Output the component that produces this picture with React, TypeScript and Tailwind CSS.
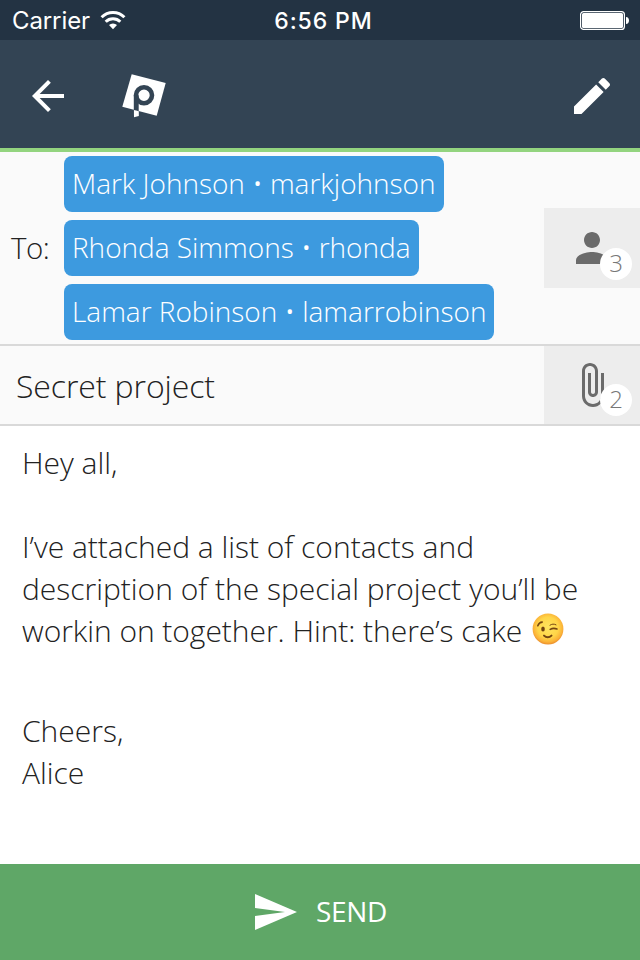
import React from "react";

const recipients = [
  { name: "Mark Johnson", user: "markjohnson", size: "w-[380px]" },
  { name: "Rhonda Simmons", user: "rhonda", size: "w-[355px]" },
  { name: "Lamar Robinson", user: "lamarrobinson", size: "w-[430px]" },
];

function Icon({ d, className = "" }: { d: string; className?: string }) {
  return (
    <svg viewBox="0 0 24 24" className={`block h-12 w-12 shrink-0 ${className}`} fill="currentColor">
      <path d={d} />
    </svg>
  );
}

const BACK = "M20 11H7.83l5.59-5.59L12 4l-8 8 8 8 1.41-1.41L7.83 13H20v-2z";
const EDIT =
  "M3 17.25V21h3.75L17.81 9.94l-3.75-3.75L3 17.25zM20.71 7.04c.39-.39.39-1.02 0-1.41l-2.34-2.34c-.39-.39-1.02-.39-1.41 0l-1.83 1.83 3.75 3.75 1.83-1.83z";
const PERSON =
  "M12 12c2.21 0 4-1.79 4-4s-1.79-4-4-4-4 1.79-4 4 1.79 4 4 4zm0 2c-2.67 0-8 1.34-8 4v2h16v-2c0-2.66-5.33-4-8-4z";
const CLIP =
  "M16.5 6v11.5c0 2.21-1.79 4-4 4s-4-1.79-4-4V5c0-1.38 1.12-2.5 2.5-2.5s2.5 1.12 2.5 2.5v10.5c0 .55-.45 1-1 1s-1-.45-1-1V6H10v9.5c0 1.38 1.12 2.5 2.5 2.5s2.5-1.12 2.5-2.5V5c0-2.21-1.79-4-4-4S7 2.79 7 5v12.5c0 3.04 2.46 5.5 5.5 5.5s5.5-2.46 5.5-5.5V6h-1.5z";
const SEND = "M2.01 21L23 12 2.01 3 2 10l15 2-15 2z";

function Wifi() {
  return (
    <svg viewBox="0 0 26 20" className="block h-5 w-[26px]" fill="none" stroke="#fff" strokeWidth="3">
      <path d="M1.6 7.3a16 16 0 0 1 22.8 0" />
      <path d="M5.7 11.8a10.3 10.3 0 0 1 14.6 0" />
      <path d="M13 19.2l-4-4.1a5.6 5.6 0 0 1 8 0z" fill="#fff" stroke="none" />
    </svg>
  );
}

function Battery() {
  return (
    <svg viewBox="0 0 50 20" className="block h-5 w-[50px]">
      <rect x="0.6" y="0.6" width="43.8" height="17.8" rx="3" fill="none" stroke="#fff" strokeWidth="1.2" />
      <rect x="2" y="2" width="41" height="15" rx="1.5" fill="#fff" />
      <path d="M46 6c4 0 4 7 0 7z" fill="#fff" />
    </svg>
  );
}

function Logo() {
  return (
    <svg viewBox="0 0 48 48" className="block h-12 w-12">
      <path d="M11.7 2.3L45.7 11 36.7 43.7 2.3 34.7z" fill="#fff" />
      <circle cx="24" cy="23.2" r="8" fill="none" stroke="#334454" strokeWidth="4.6" />
      <path d="M13.8 23.2h4.9v16l-4.9-1.3z" fill="#334454" />
      <path d="M13.9 38l4.9 1.3v4.6L14 45.3z" fill="#fff" />
    </svg>
  );
}

function Wink() {
  return (
    <svg viewBox="0 0 32 32" className="ml-[10px] inline-block h-8 w-8 align-[-3px]">
      <defs>
        <radialGradient id="face" cx="0.5" cy="0.45" r="0.56">
          <stop offset="0" stopColor="#ffe45e" />
          <stop offset="0.6" stopColor="#ffd548" />
          <stop offset="0.85" stopColor="#fbb238" />
          <stop offset="1" stopColor="#e98a2a" />
        </radialGradient>
      </defs>
      <circle cx="16" cy="16" r="15.4" fill="url(#face)" />
      <ellipse cx="11" cy="16" rx="1.8" ry="2.6" fill="#714211" />
      <g fill="none" stroke="#754512" strokeLinecap="round" strokeWidth="1.6">
        <path d="M5.8 12.8c.8-2.3 2.4-3.6 4.4-3.7" />
        <path d="M18 12.2c1.8-1.3 4-1.5 6-.4" strokeWidth="1" />
        <path d="M18.2 16.4c2-1.2 4.4-1.3 6.8-.4" />
        <path d="M12 22.6c2.2 2.1 5.3 2.1 7.5 0" strokeWidth="2" />
      </g>
    </svg>
  );
}

function CountButton({ icon, count, height }: { icon: string; count: number; height: string }) {
  return (
    <button className={`relative flex w-24 shrink-0 items-center justify-center bg-[#ededed] text-[#6b6b6b] ${height}`}>
      <Icon d={icon} />
      <span className="absolute right-2 bottom-2 flex h-8 w-8 items-center justify-center rounded-full bg-white pb-0.5 text-2xl leading-[30px] text-[#777]">
        {count}
      </span>
    </button>
  );
}

export default function App() {
  return (
    <div className="flex h-[960px] w-[640px] flex-col overflow-hidden bg-white font-['Open_Sans',sans-serif] font-light text-[#222]">
      <div className="grid h-10 grid-cols-3 items-center bg-[#233343] font-['Inter',sans-serif] text-white">
        <div className="flex items-center gap-[10px] pl-3">
          <span className="w-[78px] pt-0.5 text-[24px] leading-[38px] font-normal tracking-[-0.1px]">Carrier</span>
          <Wifi />
        </div>
        <span className="pt-0.5 pl-[7px] text-center text-[23px] leading-[38px] font-medium tracking-[0.9px] whitespace-nowrap">
          6:56 PM
        </span>
        <div className="flex justify-end pt-px pr-[10px]">
          <Battery />
        </div>
      </div>

      <header className="flex h-28 items-center border-b-4 border-[#93d47f] bg-[#334454] px-6 pt-1 pb-0 text-white">
        <Icon d={BACK} />
        <div className="ml-12">
          <Logo />
        </div>
        <Icon d={EDIT} className="ml-auto" />
      </header>

      <section className="flex h-[194px] items-center border-b-2 border-[#d9d9d9] bg-[#fafafa]">
        <span className="w-16 pl-[11px] text-[29.5px] leading-10 tracking-[-0.5px]">To:</span>
        <div className="flex flex-1 flex-col gap-2">
          {recipients.map((r) => (
            <div
              key={r.user}
              className={`h-14 rounded-lg bg-[#3d9adf] pl-2 text-[28px] leading-[54px] tracking-[-0.02px] whitespace-nowrap text-white ${r.size}`}
            >
              {r.name} • {r.user}
            </div>
          ))}
        </div>
        <CountButton icon={PERSON} count={3} height="h-20" />
      </section>

      <section className="flex h-20 items-center border-b-2 border-[#d9d9d9] bg-[#fafafa]">
        <span className="flex-1 pt-0.5 pl-4 text-[32px] leading-[76px] tracking-[-0.1px]">Secret project</span>
        <CountButton icon={CLIP} count={2} height="h-[78px]" />
      </section>

      <main className="flex-1 px-[22px] pt-4 text-[30px] leading-[42px] tracking-[-0.01px] whitespace-nowrap">
        <p>Hey all,</p>
        <p className="mt-[42px]">
          I’ve attached a list of contacts and
          <br />
          description of the special project you’ll be
          <br />
          <span className="tracking-[-0.05px]">workin on together. Hint: there’s cake</span>
          <Wink />
        </p>
        <p className="mt-[58px]">
          Cheers,
          <br />
          Alice
        </p>
      </main>

      <button className="flex h-24 items-center bg-[#5fa767] pl-[251px] text-[28px] font-normal text-white">
        <Icon d={SEND} />
        <span className="ml-[17px] pb-0.5 tracking-[-0.3px]">SEND</span>
      </button>
    </div>
  );
}
